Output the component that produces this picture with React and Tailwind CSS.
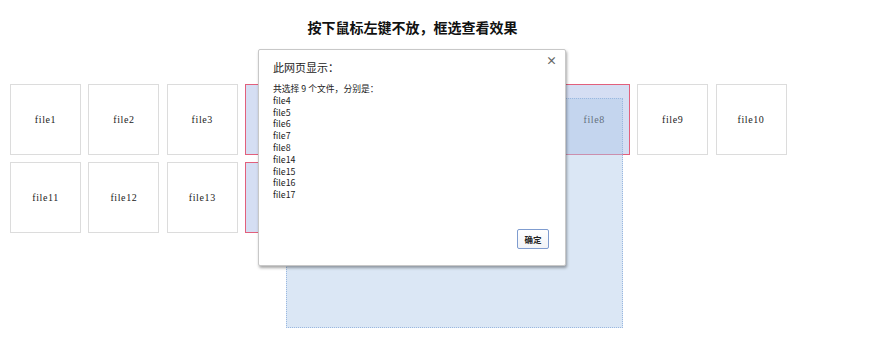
import React from 'react';

const files = Array.from({ length: 17 }, (_, i) => `file${i + 1}`);
const selected = ['file4', 'file5', 'file6', 'file7', 'file8', 'file14', 'file15', 'file16', 'file17'];

const FileBox = ({ name, active }) => (
  <div
    className={`flex h-[71px] w-[71px] items-center justify-center border text-[10px] tracking-[0.6px] text-[#222] ${
      active ? 'border-[#e2607c] bg-[#d5def3]' : 'border-[#dcdcdc] bg-white'
    }`}
    style={{ fontFamily: '"Liberation Serif", "DejaVu Serif", serif' }}
  >
    {name}
  </div>
);

const AlertDialog = () => (
  <div
    className="absolute left-[258px] top-[49px] flex h-[217px] w-[308px] flex-col rounded-[2px] border border-[#c8c8c8] bg-white pl-[14px] pr-[16px] pt-[10px] pb-[16px] text-[#222] shadow-[1px_2px_3px_rgba(0,0,0,0.35)]"
    style={{ fontFamily: '"Noto Sans CJK SC", "Noto Sans", sans-serif' }}
  >
    <span className="absolute right-[8px] top-[3px] text-[11px] font-bold leading-[14px] text-[#666]">×</span>
    <div className="h-[14px] text-[11px] leading-[14px]">此网页显示：</div>
    <div className="mt-[9px] flex-1 text-[8.8px] leading-[11.8px]">
      <div>共选择 9 个文件，分别是：</div>
      {selected.map((f) => (
        <div key={f}>{f}</div>
      ))}
    </div>
    <div className="flex justify-end">
      <button className="h-[20px] w-[32px] rounded-[2px] border border-[#7f9ccf] bg-gradient-to-b from-white to-[#f1f3f7] text-[8.5px] font-bold text-[#222]">
        确定
      </button>
    </div>
  </div>
);

const App = () => {
  return (
    <div className="relative h-[340px] w-[878px] overflow-hidden bg-white">
      <div
        className="w-[825px] pt-[18px] text-center text-[14px] font-bold leading-[18px] text-[#111]"
        style={{ fontFamily: '"Noto Sans CJK SC", serif' }}
      >
        按下鼠标左键不放，框选查看效果
      </div>

      <div className="mt-[48px] flex w-[800px] flex-wrap gap-x-[7.4px] gap-y-[7.3px] pl-[10px]">
        {files.map((f) => (
          <FileBox key={f} name={f} active={selected.includes(f)} />
        ))}
      </div>

      {/* drag selection rectangle */}
      <div className="absolute left-[286px] top-[98px] h-[230px] w-[337px] border border-dotted border-[#9ab8e0] bg-[rgba(175,202,232,0.45)]" />

      <AlertDialog />
    </div>
  );
};

export default App;
